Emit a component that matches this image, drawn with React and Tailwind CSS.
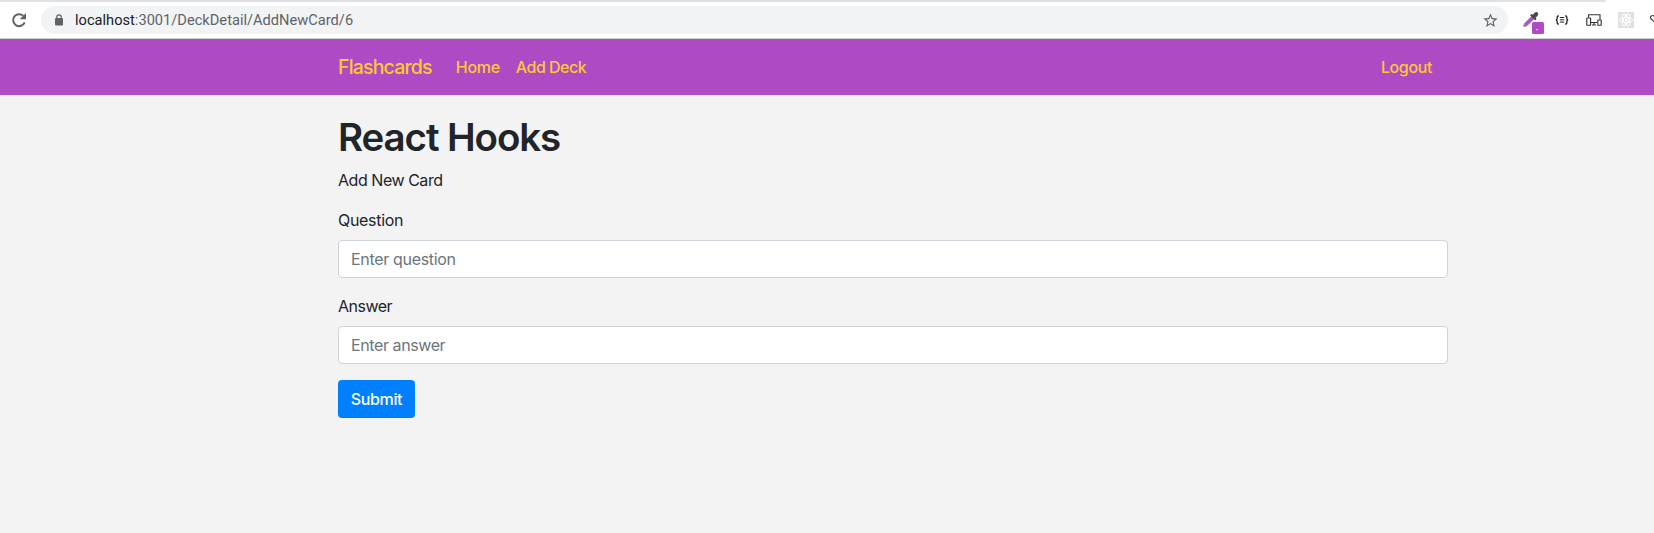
function Toolbar() {
  return (
    <div className="h-[39px] overflow-hidden border-b border-[#cdd1d5] bg-white">
      <div className="h-[2px] w-[1606px] rounded-br-[6px] bg-[#dee1e6]" />
      <div className="flex h-9 items-center">
        <svg className="ml-[10px] size-[18px] shrink-0" viewBox="0 0 18 18" fill="none" stroke="#5f6368" strokeWidth="2">
          <path d="M14.7 11.4A6 6 0 1 1 13.4 4.9" />
          <path d="M16 2v6.3H9.7z" fill="#5f6368" stroke="none" />
        </svg>
        <div className="ml-[13px] flex h-7 w-[1467px] shrink-0 items-center rounded-full bg-[#f1f3f4]">
          <svg className="ml-[13px] h-3 w-[10px] shrink-0" viewBox="0 0 10 12">
            <rect x="1" y="4" width="8" height="7.5" rx="1" fill="#5f6368" />
            <path d="M2.8 5V3a2.2 2.2 0 0 1 4.4 0v2" fill="none" stroke="#5f6368" strokeWidth="1.2" />
          </svg>
          <span className="ml-[11px] pt-px font-['Roboto',sans-serif] text-[14.6px] tracking-[0.02px] whitespace-nowrap text-[#5f6368]">
            <span className="text-[#202124]">localhost</span>:3001/DeckDetail/AddNewCard/6
          </span>
          <svg className="mr-[9px] ml-auto size-[17px] shrink-0" viewBox="0 0 24 24" fill="#5f6368">
            <path d="M22 9.24l-7.19-.62L12 2 9.19 8.63 2 9.24l5.46 4.73L5.82 21 12 17.27 18.18 21l-1.63-7.03L22 9.24zM12 15.4l-3.76 2.27 1-4.28-3.32-2.88 4.38-.38L12 6.1l1.71 4.04 4.38.38-3.32 2.88 1 4.28L12 15.4z" />
          </svg>
        </div>
        <svg className="ml-[14px] h-7 w-6 shrink-0" viewBox="0 0 24 28">
          <path d="M1.5 20.5l1-3 7-7 2.4 2.4-7.2 7z" fill="#b44fce" stroke="#888" strokeWidth=".8" />
          <path d="M8 9.2l1.4-1.3 1.3.8 1.9-2q1.9-1.3 3.1-.1t-.1 3.1l-2 2 .9 1.4-1.3 1.3z" fill="#4b4b46" />
          <rect x="10" y="16" width="12" height="12" rx="1.5" fill="#b04bc6" />
          <rect x="14.5" y="23" width="1.2" height="1.2" fill="#fff" />
        </svg>
        <svg className="ml-[9px] h-[10px] w-[14px] shrink-0" viewBox="0 0 14 10" fill="none" stroke="#222" strokeWidth="1.3">
          <path d="M3.8 1H3.2Q2.2 1 2.2 2v1.2Q2.2 5 .8 5 2.2 5 2.2 6.8V8Q2.2 9 3.2 9h.6M10.2 1h.6q1 0 1 1v1.2q0 1.8 1.4 1.8-1.4 0-1.4 1.8V8q0 1-1 1h-.6" />
          <path d="M4.8 2.5h4.4M4.8 4.8h4.4M4.8 7.1h4.4" strokeWidth="1" />
        </svg>
        <svg className="ml-[17px] h-3 w-4 shrink-0" viewBox="0 0 16 12" fill="none" stroke="#333" strokeWidth="1.1">
          <path d="M2.6 3.5V.7h11.4v5M5 8.5h6M8 8.5V11M6 11h4" />
          <rect x=".8" y="4" width="3.8" height="7.2" rx=".3" />
          <rect x="11.8" y="6" width="3.4" height="5.2" rx=".3" />
        </svg>
        <svg className="ml-4 size-4 shrink-0" viewBox="0 0 16 16" fill="none" stroke="#fff" strokeWidth="1">
          <rect width="16" height="16" fill="#e0e0e0" stroke="none" />
          <ellipse cx="8" cy="8" rx="6.5" ry="2.6" />
          <ellipse cx="8" cy="8" rx="6.5" ry="2.6" transform="rotate(60 8 8)" />
          <ellipse cx="8" cy="8" rx="6.5" ry="2.6" transform="rotate(120 8 8)" />
          <circle cx="8" cy="8" r="1.2" fill="#fff" stroke="none" />
        </svg>
        <svg className="ml-4 h-3 w-4 shrink-0" viewBox="0 0 16 12" fill="none" stroke="#444" strokeWidth="1.2">
          <path d="M8 11L1 4.8Q-.2 3 1.3 2t2.7 0L5.4 3.6" />
        </svg>
      </div>
    </div>
  );
}

export default function App() {
  return (
    <div className="h-[533px] overflow-hidden bg-[#f3f3f3] font-['Inter',sans-serif] text-base tracking-[-0.38px] text-[#212529]">
      <Toolbar />
      <nav className="h-14 bg-[#af4ac5] text-[#ffc832]">
        <div className="ml-[338px] flex h-full w-[1110px] items-center font-[450]">
          <a className="pt-px text-[19.5px] tracking-[-0.82px]">Flashcards</a>
          <a className="ml-6 tracking-[-0.3px]">Home</a>
          <a className="ml-4 tracking-[-0.5px]">Add Deck</a>
          <a className="mr-4 ml-auto">Logout</a>
        </div>
      </nav>
      <main className="ml-[338px] w-[1110px] pt-[18px]">
        <h1 className="text-[38.5px] leading-[48px] font-semibold tracking-[-1.1px]">React Hooks</h1>
        <p className="mt-[7px] mb-4 tracking-[-0.46px]">Add New Card</p>
        <label className="mb-2 block tracking-[-0.3px]">Question</label>
        <input className="block h-[38px] w-full rounded border border-[#ced4da] bg-white px-3 tracking-[-0.32px] placeholder:text-[#6c757d]" placeholder="Enter question" />
        <label className="mt-4 mb-2 block tracking-[-0.5px]">Answer</label>
        <input className="block h-[38px] w-full rounded border border-[#ced4da] bg-white px-3 tracking-[-0.4px] placeholder:text-[#6c757d]" placeholder="Enter answer" />
        <button className="mt-4 h-[38px] w-[77px] rounded bg-[#0080ff] text-center font-[450] text-white">Submit</button>
      </main>
    </div>
  );
}
